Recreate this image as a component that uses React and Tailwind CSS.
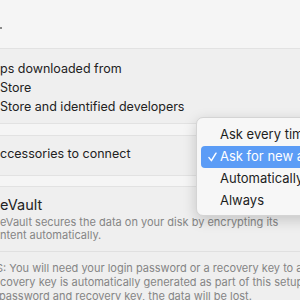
import React from "react";

const font = { fontFamily: "Inter, 'Noto Sans', sans-serif" };

const Check = () => (
  <svg
    className="absolute left-[7px] top-[6px]"
    width="9"
    height="10"
    viewBox="0 0 9 10"
    fill="none"
    stroke="currentColor"
    strokeWidth="1.5"
    strokeLinecap="round"
    strokeLinejoin="round"
  >
    <path d="M1 5.6 L3.4 8.6 L8 1.2" />
  </svg>
);

const MenuItem = ({ label, checked }) => (
  <div
    className={`relative h-[22px] flex items-center pl-[19px] rounded-[4px] whitespace-nowrap ${
      checked ? "bg-[#5b9cf6] text-white" : "text-[#1d1d1d]"
    }`}
  >
    {checked && <Check />}
    <span className="text-[13px]">{label}</span>
  </div>
);

const PopupMenu = () => (
  <div className="absolute left-[196px] top-[117px] w-[140px] rounded-[7px] border border-[#d4d4d4] bg-[#f7f7f7] shadow-[0_4px_14px_rgba(0,0,0,0.18)] px-[4px] pt-[6px] pb-[3px]">
    <MenuItem label="Ask every time" />
    <MenuItem label="Ask for new accessories" checked />
    <MenuItem label="Automatically when unlocked" />
    <MenuItem label="Always" />
  </div>
);

export default function App() {
  return (
    <div
      className="relative w-[300px] h-[300px] overflow-hidden bg-[#f5f5f5] text-[#222222]"
      style={font}
    >
      <div className="h-[48px] relative">
        <span className="absolute left-0 top-[27px] w-[2px] h-[2px] bg-[#8a8a8a]" />
      </div>

      <div className="border-t border-b border-[#e2e2e2] bg-[#efefef] h-[76px] pt-[10px] text-[12.5px] leading-[19px] whitespace-nowrap">
        <div>ps downloaded from</div>
        <div>Store</div>
        <div>Store and identified developers</div>
      </div>

      <div className="h-[11px]" />

      <div className="border-t border-b border-[#e2e2e2] bg-[#efefef] h-[41px] flex items-center pb-[2px] text-[12.5px] whitespace-nowrap">
        ccessories to connect
      </div>

      <div className="h-[10px]" />

      <div className="border-t border-[#e2e2e2] bg-[#efefef] h-[120px] whitespace-nowrap">
        <div className="pt-[8px] text-[14.5px] leading-[20px]">eVault</div>
        <div className="text-[11px] leading-[13px] text-[#858585] pt-[1px]">
          <div>eVault secures the data on your disk by encrypting its</div>
          <div>ntent automatically.</div>
        </div>
        <div className="mt-[9px] border-t border-[#e0e0e0] pt-[9px] text-[11px] leading-[14px] text-[#858585]">
          <div className="-ml-[4px]">S: You will need your login password or a recovery key to access</div>
          <div>covery key is automatically generated as part of this setup</div>
          <div className="-ml-[1px]"> password and recovery key, the data will be lost.</div>
        </div>
      </div>

      <PopupMenu />
    </div>
  );
}
